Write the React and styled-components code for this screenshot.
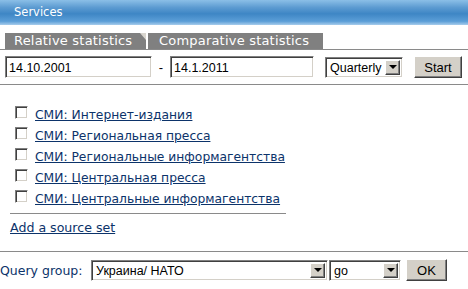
import React from 'react';
import styled, { createGlobalStyle } from 'styled-components';

const sources = [
    'СМИ: Интернет-издания',
    'СМИ: Региональная пресса',
    'СМИ: Региональные информагентства',
    'СМИ: Центральная пресса',
    'СМИ: Центральные информагентства',
];

function Select({ value, width }) {
    return (
        <SelectBox $width={width}>
            <SelectValue>{value}</SelectValue>
            <ArrowButton>
                <Arrow />
            </ArrowButton>
        </SelectBox>
    );
}

function App() {
    return (
        <Page>
            <GlobalStyle />
            <Header>Services</Header>
            <Tabs>
                <Tab $active>Relative statistics<Notch /></Tab>
                <Tab>Comparative statistics</Tab>
            </Tabs>
            <FormRow>
                <DateInput $width={147} defaultValue="14.10.2001" />
                <Dash>-</Dash>
                <DateInput $width={144} defaultValue="14.1.2011" />
                <Select value="Quarterly" width={78} />
                <Button $width={48}>Start</Button>
            </FormRow>
            <Divider />
            <SourceList>
                {sources.map((name) => (
                    <SourceItem key={name}>
                        <Checkbox />
                        <Link href="#">{name}</Link>
                    </SourceItem>
                ))}
            </SourceList>
            <ShortDivider />
            <AddLink href="#">Add a source set</AddLink>
            <Divider $top={16} />
            <QueryRow>
                <Label>Query group:</Label>
                <Select value="Украина/ НАТО" width={237} />
                <Select value="go" width={72} />
                <Button $width={41} $left={5}>OK</Button>
            </QueryRow>
        </Page>
    );
}

const GlobalStyle = createGlobalStyle`
    body {
        margin: 0;
        background: #fff;
        font-family: "DejaVu Sans", Verdana, sans-serif;
    }
`;
const Page = styled.div`
    width: 468px;
    height: 289px;
    overflow: hidden;
`;
const Header = styled.div`
    height: 25px;
    padding-left: 14px;
    line-height: 24px;
    font-size: 11.5px;
    color: #fff;
    background: linear-gradient(#8bbfe7 0%, #5c9bd1 30%, #3e86c5 55%, #5b9ed7 85%, #a8cdec 100%);
`;
const Tabs = styled.div`
    display: flex;
    margin-top: 8px;
    padding-left: 5px;
    border-bottom: 1px solid #8a8a8a;
`;
const Tab = styled.div`
    position: relative;
    height: 16px;
    padding: 0 15px 0 9px;
    margin-right: 2px;
    width: ${(p) => (p.$active ? '141px' : '175px')};
    box-sizing: border-box;
    background: #808080;
    color: #fff;
    font-size: 13px;
    letter-spacing: 0.2px;
    line-height: 16px;
    white-space: nowrap;
    &:last-child {
        padding-left: 11px;
    }
`;
const Notch = styled.span`
    position: absolute;
    right: 0;
    top: 0;
    width: 0;
    height: 0;
    border-top: 7px solid #d9d6cf;
    border-left: 6px solid transparent;
`;
const FormRow = styled.div`
    display: flex;
    align-items: center;
    margin-top: 6px;
    padding-left: 5px;
    height: 22px;
`;
const sunken = `
    box-sizing: border-box;
    border: 1px solid;
    border-color: #808080 #fff #fff #808080;
    box-shadow: inset 1px 1px #404040, inset -1px -1px #d4d0c8;
    background: #fff;
`;
const raised = `
    box-sizing: border-box;
    border: 1px solid;
    border-color: #fff #404040 #404040 #fff;
    box-shadow: inset -1px -1px #808080;
    background: #d4d0c8;
`;
const DateInput = styled.input`
    ${sunken}
    width: ${(p) => p.$width}px;
    height: 22px;
    padding: 2px 3px 0;
    font-family: "Liberation Sans", Arial, sans-serif;
    font-size: 12.5px;
    color: #000;
    outline: none;
`;
const Dash = styled.span`
    width: 18px;
    text-align: center;
    font-family: "Liberation Sans", Arial, sans-serif;
    font-size: 13px;
`;
const SelectBox = styled.div`
    ${sunken}
    display: flex;
    align-items: stretch;
    width: ${(p) => p.$width}px;
    height: 21px;
    padding: 2px;
    margin-left: ${(p) => (p.$width > 100 || p.$width < 75 ? 0 : 11)}px;
    & + & {
        margin-left: 1px;
    }
`;
const SelectValue = styled.span`
    flex: 1;
    padding-left: 2px;
    font-family: "Liberation Sans", Arial, sans-serif;
    font-size: 12.5px;
    line-height: 16px;
    color: #000;
    white-space: nowrap;
    overflow: hidden;
`;
const ArrowButton = styled.span`
    ${raised}
    display: flex;
    align-items: center;
    justify-content: center;
    width: 15px;
`;
const Arrow = styled.span`
    width: 0;
    height: 0;
    border-left: 4px solid transparent;
    border-right: 4px solid transparent;
    border-top: 4px solid #000;
`;
const Button = styled.button`
    ${raised}
    width: ${(p) => p.$width}px;
    height: 22px;
    margin-left: ${(p) => (p.$left !== undefined ? p.$left : 11)}px;
    padding: 0;
    font-family: "Liberation Sans", Arial, sans-serif;
    font-size: 13px;
    color: #000;
`;
const Divider = styled.div`
    margin-top: ${(p) => (p.$top !== undefined ? p.$top : 6)}px;
    height: 1px;
    background: #8a8a8a;
`;
const SourceList = styled.div`
    margin-top: 19px;
    padding-left: 15px;
`;
const SourceItem = styled.div`
    display: flex;
    align-items: center;
    height: 21px;
`;
const Checkbox = styled.span`
    ${sunken}
    width: 13px;
    height: 13px;
    margin-right: 7px;
    margin-top: -4px;
`;
const Link = styled.a`
    font-size: 12.3px;
    color: #0c336a;
    text-decoration: underline;
`;
const ShortDivider = styled.div`
    width: 276px;
    height: 1px;
    margin: 4px 0 0 10px;
    background: #8a8a8a;
`;
const AddLink = styled(Link)`
    display: block;
    margin: 6px 0 0 10px;
    font-size: 12.6px;
    line-height: 15px;
`;
const QueryRow = styled.div`
    display: flex;
    align-items: center;
    margin-top: 7px;
    height: 22px;
`;
const Label = styled.span`
    width: 91px;
    font-size: 12.5px;
    color: #0c336a;
`;

export default App;
